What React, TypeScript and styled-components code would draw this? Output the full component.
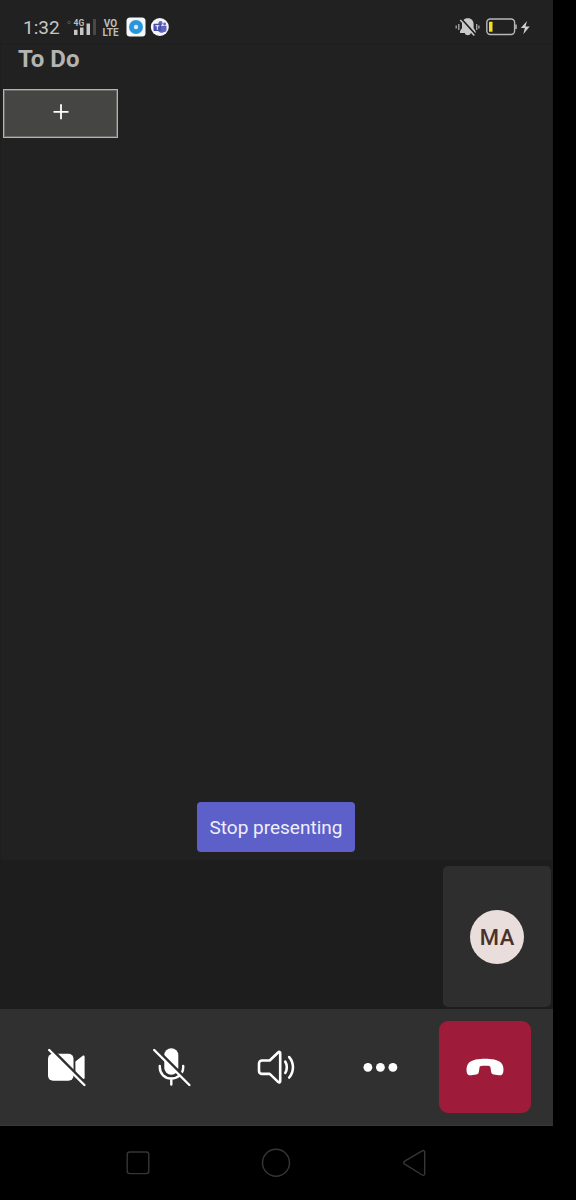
import React from "react";
import styled, { createGlobalStyle } from "styled-components";

const GlobalStyle = createGlobalStyle`
  * { box-sizing: border-box; }
  body { margin: 0; background: #000; font-family: Roboto, "Liberation Sans", sans-serif; }
  button { font: inherit; border: 0; padding: 0; margin: 0; color: inherit; background: none; }
  svg { display: block; flex: none; }
`;

const Screen = styled.div`
  width: 553px;
  height: 1200px;
  display: flex;
  flex-direction: column;
  background: #212121;
`;

const StatusBar = styled.header`
  height: 43px;
  flex: none;
  display: flex;
  align-items: center;
  justify-content: space-between;
  padding: 11px 23px 0 23px;
  color: #c6c6c6;
`;

const StatusGroup = styled.div<{ $gap: number }>`
  display: flex;
  align-items: center;
  gap: ${(p) => p.$gap}px;
`;

const Clock = styled.span`
  width: 37px;
  font-size: 19px;
  line-height: 22px;
  padding-top: 2px;
  white-space: nowrap;
`;

const Signal = styled.div`
  width: 28px;
  height: 20px;
`;

const Volte = styled.div`
  width: 17px;
  display: flex;
  flex-direction: column;
  align-items: center;
  font-size: 10px;
  line-height: 9px;
  font-weight: 700;
  padding-top: 1px;
  color: #bdbdbd;
`;

const Stage = styled.main`
  height: 817px;
  flex: none;
  display: flex;
  flex-direction: column;
  align-items: flex-start;
  border: 1px solid #1e1e1e;
  border-bottom: 0;
`;

const Title = styled.h1`
  margin: 0 0 0 17px;
  height: 45px;
  font-size: 24px;
  line-height: 30px;
  font-weight: 700;
  color: #b3b3b3;
`;

const AddButton = styled.button`
  width: 115px;
  height: 49px;
  margin-left: 2px;
  border: 1px solid #b4b4b4;
  outline: 1px solid #6a6a69;
  outline-offset: -2px;
  background: #454543;
  display: flex;
  align-items: center;
  justify-content: center;
  padding-bottom: 4px;
`;

const StopButton = styled.button`
  width: 158px;
  height: 50px;
  margin: auto 0 8px 196px;
  border-radius: 4px;
  background: #5e60c9;
  color: #eeeefa;
  font-size: 19px;
  line-height: 50px;
  padding-top: 1px;
  white-space: nowrap;
`;

const Participants = styled.section`
  height: 149px;
  flex: none;
  display: flex;
  justify-content: flex-end;
  padding: 6px 2px 2px;
  background: #1d1d1d;
`;

const Tile = styled.div`
  width: 108px;
  height: 141px;
  border-radius: 5px;
  background: #2e2e2e;
  display: flex;
  align-items: center;
  justify-content: center;
`;

const Avatar = styled.div`
  width: 54px;
  height: 54px;
  border-radius: 50%;
  background: #e9dedb;
  color: #4c302b;
  font-size: 22px;
  font-weight: 500;
  line-height: 55px;
  text-align: center;
  letter-spacing: 0.7px;
  text-indent: 0.7px;
`;

const Controls = styled.section`
  height: 117px;
  flex: none;
  display: flex;
  align-items: center;
  padding: 0 22px 0 14px;
  background: #303030;
  border-bottom: 1px solid #383838;
`;

const ControlButton = styled.button`
  width: 104.7px;
  height: 92px;
  display: flex;
  align-items: center;
  justify-content: center;
`;

const HangUp = styled(ControlButton)`
  width: 92px;
  margin-left: auto;
  border-radius: 9px;
  background: #9e1c3a;
`;

const NavBar = styled.nav`
  flex: 1;
  display: grid;
  grid-template-columns: repeat(3, 138px);
  justify-content: center;
  justify-items: center;
  align-items: center;
  padding-right: 1px;
  background: #000;
`;

export default function App() {
  return (
    <>
      <GlobalStyle />
      <Screen>
        <StatusBar>
          <StatusGroup $gap={7}>
            <Clock>1:32</Clock>
            <Signal>
              <svg width="30" height="20" viewBox="0 0 30 20">
                <circle cx="2" cy="5.5" r="1.3" fill="none" stroke="#555" />
                <text x="6.5" y="8.6" fontSize="8.5" fontWeight="700" fill="#bdbdbd">4G</text>
                <rect x="7" y="12.8" width="3.5" height="5.2" fill="#c6c6c6" />
                <rect x="13" y="10.5" width="3.5" height="7.5" fill="#c6c6c6" />
                <rect x="19.5" y="6.5" width="3.5" height="11.5" fill="#c6c6c6" />
                <rect x="26" y="2" width="3" height="16" fill="#484848" />
              </svg>
            </Signal>
            <Volte>
              <span>VO</span>
              <span>LTE</span>
            </Volte>
            <svg width="43" height="20" viewBox="0 0 43 20">
              <rect x="0.5" y="0.5" width="19" height="19" rx="3.5" fill="#f4f7fa" />
              <circle cx="10" cy="10" r="7" fill="#2b95dc" />
              <circle cx="10" cy="10" r="2.2" fill="#d5ecfa" />
              <circle cx="33.8" cy="10" r="9" fill="#f5f5fb" />
              <circle cx="34.5" cy="6.2" r="2.1" fill="#6064bc" />
              <circle cx="38.6" cy="7" r="1.4" fill="#6064bc" />
              <path d="M31.5 8.7h9v4.1c0 1.6-1.2 2.4-2.5 2.2-.8 1.2-4.8 1-5.8-1z" fill="#6064bc" />
              <rect x="27.5" y="6.8" width="7.5" height="7.2" rx="0.8" fill="#484eac" />
              <path d="M29.3 8.8h4M31.3 8.8v4" stroke="#fff" strokeWidth="1" />
            </svg>
          </StatusGroup>
          <StatusGroup $gap={6}>
            <svg width="25" height="20" viewBox="0 0 25 20" fill="none">
              <path d="M12.8 1.2C8.9 1.2 7 3.8 7 7v4L5 14.2V16h15.6v-1.8L18.6 11V7c0-3.2-2-5.8-5.8-5.8zM9.8 16h6c-.5 3-5.5 3-6 0z" fill="#c9c9c9" />
              <path d="M1.2 8.5v3M3.8 7v6M21.7 7v6M23.9 8.5v3" stroke="#aaa" strokeWidth="1.3" />
              <path d="M6.6 2.2L20.6 17.6" stroke="#212121" strokeWidth="1.8" />
              <path d="M5.3 3L19.3 18.5" stroke="#c9c9c9" strokeWidth="1.5" />
            </svg>
            <svg width="44" height="20" viewBox="0 0 44 20">
              <rect x="0.8" y="2" width="27.8" height="15.5" rx="3.5" fill="none" stroke="#b9b9b9" strokeWidth="1.4" />
              <path d="M30 7.5v4.5" stroke="#b9b9b9" strokeWidth="1.5" />
              <rect x="3" y="4.8" width="3.5" height="10" rx="0.5" fill="#f2de26" />
              <path d="M41 4L34.8 11h4l-1.5 6.2 6.4-7.6h-4.2z" fill="#cfcfcf" />
            </svg>
          </StatusGroup>
        </StatusBar>

        <Stage>
          <Title>To Do</Title>
          <AddButton aria-label="Add">
            <svg width="16" height="16" viewBox="0 0 16 16">
              <path d="M8 0.3v15M0.5 7.8h15" stroke="#fff" strokeWidth="1.8" />
            </svg>
          </AddButton>
          <StopButton>Stop presenting</StopButton>
        </Stage>

        <Participants>
          <Tile>
            <Avatar>MA</Avatar>
          </Tile>
        </Participants>

        <Controls>
          <ControlButton aria-label="Camera off">
            <svg width="40" height="40" viewBox="0 0 40 40">
              <rect x="2" y="6.7" width="25.5" height="27" rx="5" fill="#fff" />
              <path d="M29.4 14.5l7-5.6c1.2-.9 2.2-.5 2.2.8v21c0 1.3-1 1.7-2.2.8l-7-5.6z" fill="#fff" />
              <path d="M5 1.8L40.2 37" stroke="#303030" strokeWidth="3" />
              <path d="M3.2 3L38.4 38" stroke="#fff" strokeWidth="2.4" strokeLinecap="round" />
            </svg>
          </ControlButton>
          <ControlButton aria-label="Microphone off">
            <svg width="40" height="40" viewBox="0 0 40 40" fill="none">
              <rect x="13.3" y="1.2" width="14" height="26.5" rx="7" fill="#fff" />
              <path d="M8.8 19v1.3c0 6.5 4.8 11.2 11.5 11.2s11.9-4.7 11.9-11.2V19M20.3 31.5v6" stroke="#fff" strokeWidth="2.4" strokeLinecap="round" />
              <path d="M5 1.8L40.2 37" stroke="#303030" strokeWidth="2.8" />
              <path d="M3.2 3L38.4 38" stroke="#fff" strokeWidth="2.4" strokeLinecap="round" />
            </svg>
          </ControlButton>
          <ControlButton aria-label="Speaker">
            <svg width="40" height="40" viewBox="0 0 40 40" fill="none" stroke="#fff" strokeWidth="2.6" strokeLinejoin="round" strokeLinecap="round">
              <path d="M6 13.5h7.7l8.4-8c1-1 2.1-.6 2.1.6v28.2c0 1.2-1.1 1.6-2.1.6l-8.4-8H6c-1.8 0-3-1.2-3-3v-7.4c0-1.8 1.2-3 3-3z" />
              <path d="M29.3 14.7c2 3 2 8.2 0 11.2M33.2 10.1c5 5.7 5 14.7 0 20.4" />
            </svg>
          </ControlButton>
          <ControlButton aria-label="More">
            <svg width="40" height="40" viewBox="0 0 40 40" fill="#fff">
              <circle cx="7.9" cy="20.3" r="4.4" />
              <circle cx="20.4" cy="20.3" r="4.4" />
              <circle cx="32.9" cy="20.3" r="4.4" />
            </svg>
          </ControlButton>
          <HangUp aria-label="Hang up">
            <svg width="40" height="40" viewBox="0 0 40 40">
              <path d="M20 11.8c6.5 0 13 .9 16.3 4.2 2.2 2.2 2.6 6.4 1.9 9.4-.5 2.2-2.3 3.2-4.4 2.8l-5-.8c-1.5-.3-2.4-1.1-2.6-2.5l-.8-4.6c-.2-1.2-1.5-1.5-5.4-1.5s-5.2.3-5.4 1.5l-.8 4.6c-.2 1.4-1.1 2.2-2.6 2.5l-5 .8c-2.1.4-3.9-.6-4.4-2.8-.7-3-.3-7.2 1.9-9.4 3.3-3.3 9.8-4.2 16.3-4.2z" fill="#fff" />
            </svg>
          </HangUp>
        </Controls>

        <NavBar>
          <svg width="30" height="30" viewBox="0 0 30 30" fill="none" stroke="#383634" strokeWidth="1.4">
            <rect x="4.2" y="4" width="21.6" height="21.6" rx="2.5" />
          </svg>
          <svg width="30" height="30" viewBox="0 0 30 30" fill="none" stroke="#383634" strokeWidth="1.4">
            <circle cx="15" cy="14.8" r="13.5" />
          </svg>
          <svg width="30" height="30" viewBox="0 0 30 30" fill="none" stroke="#383634" strokeWidth="1.4">
            <path d="M5.7 13.1L23.2 2.8c1.3-.8 2.5 0 2.5 1.5v21.3c0 1.5-1.2 2.2-2.5 1.4L5.7 16.2c-1.4-.9-1.4-2.2 0-3.1z" />
          </svg>
        </NavBar>
      </Screen>
    </>
  );
}
